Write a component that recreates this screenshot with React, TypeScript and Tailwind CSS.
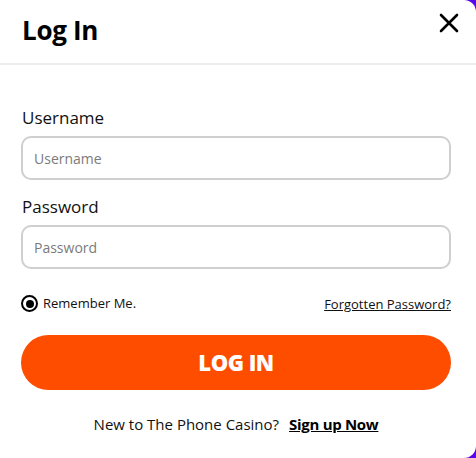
import React from "react";

export default function App() {
  const font = { fontFamily: '"Open Sans", "Noto Sans", sans-serif' };
  return (
    <div className="w-[476px] h-[458px] bg-[#5a06e6] overflow-hidden" style={font}>
      <div className="w-[476px] h-[458px] bg-white rounded-r-[12px] flex flex-col">
        <div className="h-[65px] flex items-center justify-between pl-[22px] pr-[16px] border-b-2 border-[#eeeeee] shrink-0">
          <h1 className="text-[26px] font-bold text-black tracking-[-0.3px] mb-[2px]">Log In</h1>
          <button className="w-[22px] h-[22px] flex items-center justify-center mb-[17px]">
            <svg width="20" height="20" viewBox="0 0 20 20">
              <path d="M2 2 L18 18 M18 2 L2 18" stroke="#000" strokeWidth="2.6" strokeLinecap="round" />
            </svg>
          </button>
        </div>
        <div className="pl-[21px] pr-[25px] pt-[41px] flex flex-col">
          <label className="text-[17px] text-[#111] leading-[24px] ml-[1px]">Username</label>
          <input
            className="mt-[6px] h-[44px] w-full rounded-[10px] border-2 border-[#cfcfcf] px-[11px] text-[14px] placeholder:text-[#7b7b7b] outline-none"
            placeholder="Username"
            style={font}
          />
          <label className="mt-[15px] text-[17px] text-[#111] leading-[24px] ml-[1px]">Password</label>
          <input
            type="password"
            className="mt-[6px] h-[44px] w-full rounded-[10px] border-2 border-[#cfcfcf] px-[11px] text-[14px] placeholder:text-[#7b7b7b] outline-none"
            placeholder="Password"
            style={font}
          />
          <div className="mt-[24px] flex items-center justify-between">
            <div className="flex items-center gap-[5px]">
              <span className="w-[17px] h-[17px] rounded-full border-[2.5px] border-black flex items-center justify-center">
                <span className="w-[8px] h-[8px] rounded-full bg-black" />
              </span>
              <span className="text-[13px] text-[#111]">Remember Me.</span>
            </div>
            <a className="text-[13px] text-[#111] underline mt-[2px]">Forgotten Password?</a>
          </div>
          <button className="mt-[20px] h-[55px] w-full rounded-full bg-[#ff4d00] text-white text-[22px] font-extrabold tracking-[-0.5px]">
            LOG IN
          </button>
          <div className="mt-[23px] flex items-center justify-center gap-[10px] text-[15px] text-[#111]">
            <span>New to The Phone Casino?</span>
            <a className="font-bold underline text-black tracking-[-0.3px]">Sign up Now</a>
          </div>
        </div>
      </div>
    </div>
  );
}
